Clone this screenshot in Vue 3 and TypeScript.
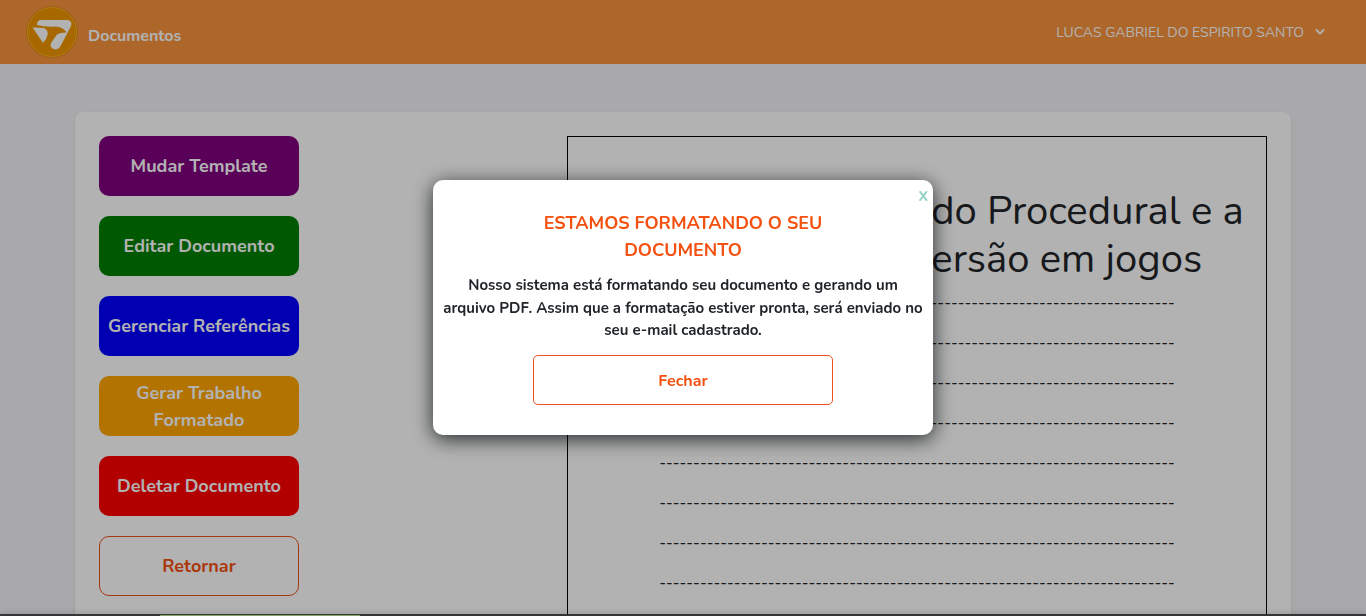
<script setup lang="ts">
import { ref } from 'vue'

interface Action {
  label: string
  kind: string
}

const actions: Action[] = [
  { label: 'Mudar Template', kind: 'purple' },
  { label: 'Editar Documento', kind: 'green' },
  { label: 'Gerenciar Referências', kind: 'blue' },
  { label: 'Gerar Trabalho Formatado', kind: 'orange' },
  { label: 'Deletar Documento', kind: 'red' },
  { label: 'Retornar', kind: 'outline' },
]

const rule = '-'.repeat(76)
const open = ref(true)
</script>

<template>
  <div class="page">
    <header class="topbar">
      <a class="brand" href="#">
        <svg class="logo" viewBox="0 0 52 52" aria-hidden="true">
          <circle cx="26" cy="26" r="26" fill="#e58a1c" />
          <circle cx="26" cy="26" r="24.5" fill="#f09600" stroke="#fcb322" stroke-width="1" />
          <path
            fill="#fff"
            d="M11 19 Q11 14 15 14 H41.500 Q47 15 44.800 20.500 L34 41 Q31.500 44.500 27.500 43 Q23.500 41 25 37 L31 28.500 Q34 26.500 40.500 26.500 Q37 21 29.500 20.500 Q20 21.500 11 19 Z"
          />
          <path fill="#fff" d="M6.500 21.500 L18 22 Q22.500 24 21.500 29 Q20.500 34 17 36.800 Z" />
        </svg>
        <span class="brand-name">Documentos</span>
      </a>
      <button class="user" type="button">
        <span>LUCAS GABRIEL DO ESPIRITO SANTO</span>
        <svg class="chevron" viewBox="0 0 16 16" aria-hidden="true">
          <path d="M4.500 6 L8 9.500 L11.500 6" fill="none" stroke="#fff" stroke-width="1.800" stroke-linecap="round" stroke-linejoin="round" />
        </svg>
      </button>
    </header>

    <main class="card">
      <nav class="actions">
        <button v-for="a in actions" :key="a.label" type="button" class="action" :class="a.kind">
          {{ a.label }}
        </button>
      </nav>
      <article class="sheet">
        <h1 class="sheet-title">
          <span>Geração de Conteúdo Procedural e a</span>
          <span>relevância da diversão em jogos</span>
        </h1>
        <p v-for="n in 8" :key="n" class="rule">{{ rule }}</p>
      </article>
    </main>

    <div class="bottom-edge"><span class="bottom-mark"></span></div>

    <div v-if="open" class="overlay">
      <section class="modal" role="dialog" aria-labelledby="modal-title">
        <button class="close" type="button" aria-label="Fechar janela" @click="open = false">X</button>
        <h2 id="modal-title" class="modal-title">ESTAMOS FORMATANDO O SEU DOCUMENTO</h2>
        <p class="modal-text">
          Nosso sistema está formatando seu documento e gerando um arquivo PDF. Assim que a formatação
          estiver pronta, será enviado no seu e-mail cadastrado.
        </p>
        <button class="dismiss" type="button" @click="open = false">Fechar</button>
      </section>
    </div>
  </div>
</template>

<style>
body {
  margin: 0;
  overflow: hidden;
}
</style>

<style scoped>
.page,
.page * {
  box-sizing: border-box;
}
.page {
  height: 100vh;
  overflow: hidden;
  background: #f2f2f5;
  font-family: Nunito, Lato, 'Open Sans', sans-serif;
  font-size: 16px;
  line-height: 24px;
  color: #212529;
}
button {
  font-family: inherit;
  cursor: pointer;
}
.topbar {
  display: flex;
  align-items: center;
  justify-content: space-between;
  height: 64px;
  padding: 0 38px 0 26px;
  background: #f9943e;
}
.brand {
  display: flex;
  align-items: center;
  gap: 10px;
  color: #fff;
  text-decoration: none;
}
.logo {
  width: 52px;
  height: 52px;
}
.brand-name {
  padding-top: 8px;
  font-size: 16px;
  font-weight: 700;
}
.user {
  display: flex;
  align-items: center;
  gap: 8px;
  padding: 0;
  border: 0;
  background: none;
  color: #fff;
  font-size: 14px;
}
.chevron {
  width: 16px;
  height: 16px;
}
.card {
  display: flex;
  justify-content: space-between;
  max-width: 1216px;
  margin: 48px auto 0;
  padding: 24px;
  border-radius: 8px;
  background: #fff;
  box-shadow: 0 1px 3px rgba(0, 0, 0, 0.1);
}
.actions {
  display: flex;
  flex-direction: column;
  gap: 20px;
  width: 200px;
}
.action {
  height: 60px;
  padding: 1px 8px 0;
  border: 0;
  border-radius: 10px;
  color: #fff;
  font-size: 18px;
  font-weight: 700;
  line-height: 27px;
}
.purple {
  background: #800080;
}
.green {
  background: #008000;
}
.blue {
  background: #0000ff;
}
.orange {
  background: #ffa500;
}
.red {
  background: #ff0000;
}
.outline {
  border: 1px solid #e8501c;
  background: #fff;
  color: #f4500f;
}
.sheet {
  width: 700px;
  padding: 50px 0 60px;
  border: 1px solid #000;
  text-align: center;
}
.sheet-title {
  margin: 0 0 8px;
  font-size: 40px;
  font-weight: 400;
  line-height: 48px;
}
.sheet-title span {
  display: block;
}
.rule {
  margin: 0 0 16px;
  white-space: nowrap;
}
.bottom-edge {
  position: fixed;
  right: 0;
  bottom: 0;
  left: 0;
  height: 2px;
  padding: 1px 0 0 160px;
  background: #4c4d4f;
  box-shadow: 0 0 6px rgba(0, 0, 0, 0.3);
}
.bottom-mark {
  display: block;
  width: 200px;
  height: 1px;
  background: #b9f08a;
}
.overlay {
  position: fixed;
  inset: 0;
  display: flex;
  align-items: center;
  justify-content: center;
  padding-bottom: 1px;
  background: rgba(0, 0, 0, 0.3);
}
.modal {
  position: relative;
  display: flex;
  flex-direction: column;
  align-items: center;
  width: 500px;
  padding: 30px 10px;
  border-radius: 10px;
  background: #fff;
  box-shadow: 0 4px 20px rgba(0, 8, 10, 0.8);
  text-align: center;
}
.close {
  position: absolute;
  top: 5px;
  right: 5px;
  padding: 0;
  border: 0;
  background: none;
  color: #98d4c6;
  font-size: 14px;
  font-weight: 800;
  line-height: 24px;
}
.modal-title {
  width: 300px;
  margin: 0 0 10px;
  color: #f4500f;
  font-size: 18px;
  font-weight: 700;
  line-height: 27px;
}
.modal-text {
  margin: 0 0 13px;
  font-size: 15px;
  font-weight: 700;
  line-height: 1.5;
}
.dismiss {
  width: 300px;
  height: 50px;
  padding: 2px 0 0;
  border: 1px solid #e8501c;
  border-radius: 5px;
  background: #fff;
  color: #f4500f;
  font-size: 16px;
  font-weight: 700;
}
</style>
